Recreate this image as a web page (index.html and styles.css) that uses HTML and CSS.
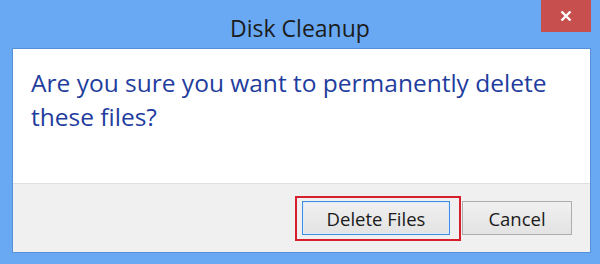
FILE: index.html
```html
<!DOCTYPE html>
<html lang="en">
<head>
    <meta charset="UTF-8">
    <meta name="viewport" content="width=device-width, initial-scale=1.0">
    <title>Disk Cleanup</title>
    <link rel="stylesheet" href="styles.css">
</head>
<body>
    <div class="window">
        <div class="title-bar">
            <div class="title">Disk Cleanup</div>
            <button class="close-button" aria-label="Close">
                <svg width="12" height="12" viewBox="0 0 12 12">
                    <path d="M1.5 1.5 L10.5 10.5 M10.5 1.5 L1.5 10.5" stroke="#ffffff" stroke-width="2.4" fill="none"/>
                </svg>
            </button>
        </div>
        <div class="dialog">
            <div class="message">Are you sure you want to permanently delete these files?</div>
            <div class="footer">
                <span class="highlight">
                    <button class="dialog-button default">Delete Files</button>
                </span>
                <button class="dialog-button">Cancel</button>
            </div>
        </div>
    </div>
</body>
</html>
```

FILE: styles.css
```css
body {
    margin: 0;
    width: 600px;
    height: 264px;
    background-color: #69a9f3;
    font-family: "Open Sans", "Noto Sans", sans-serif;
    overflow: hidden;
}
.window {
    display: flex;
    flex-direction: column;
}
.title-bar {
    display: grid;
    grid-template-columns: 1fr auto 1fr;
    height: 48px;
    padding: 0 9px;
}
.title {
    grid-column: 2;
    font-size: 23px;
    line-height: 31px;
    color: #1c1c1c;
    padding-top: 13px;
}
.close-button {
    grid-column: 3;
    justify-self: end;
    width: 50px;
    height: 32px;
    padding: 0;
    border: none;
    background-color: #c7504f;
    display: flex;
    align-items: center;
    justify-content: center;
}
.dialog {
    margin: 0 9px 0 12px;
    border: 1px solid #5590d8;
    height: 203px;
    display: flex;
    flex-direction: column;
}
.message {
    background: white;
    height: 135px;
    box-sizing: border-box;
    padding: 17px 10px 0 18px;
    font-size: 24.5px;
    line-height: 34px;
    color: #1f3d9e;
    border-bottom: 1px solid #dfdfdf;
}
.footer {
    flex-grow: 1;
    background-color: #f0f0f0;
    display: flex;
    justify-content: flex-end;
    align-items: center;
    gap: 12px;
    padding-right: 18px;
}
.highlight {
    position: relative;
    display: flex;
}
.highlight::after {
    content: "";
    position: absolute;
    top: -5px;
    left: -7px;
    right: -11px;
    bottom: -6px;
    border: 2px solid #d51f2a;
}
.dialog-button {
    height: 34px;
    width: 110px;
    padding: 0;
    font-family: "Open Sans", "Noto Sans", sans-serif;
    font-size: 18.5px;
    color: #1a1a1a;
    background: linear-gradient(#f0f0f0, #e3e3e3);
    border: 1px solid #adadad;
}
.dialog-button.default {
    width: 148px;
    border-color: #3d8ee3;
    box-shadow: inset 0 0 0 1px #dcecfc;
}
```
